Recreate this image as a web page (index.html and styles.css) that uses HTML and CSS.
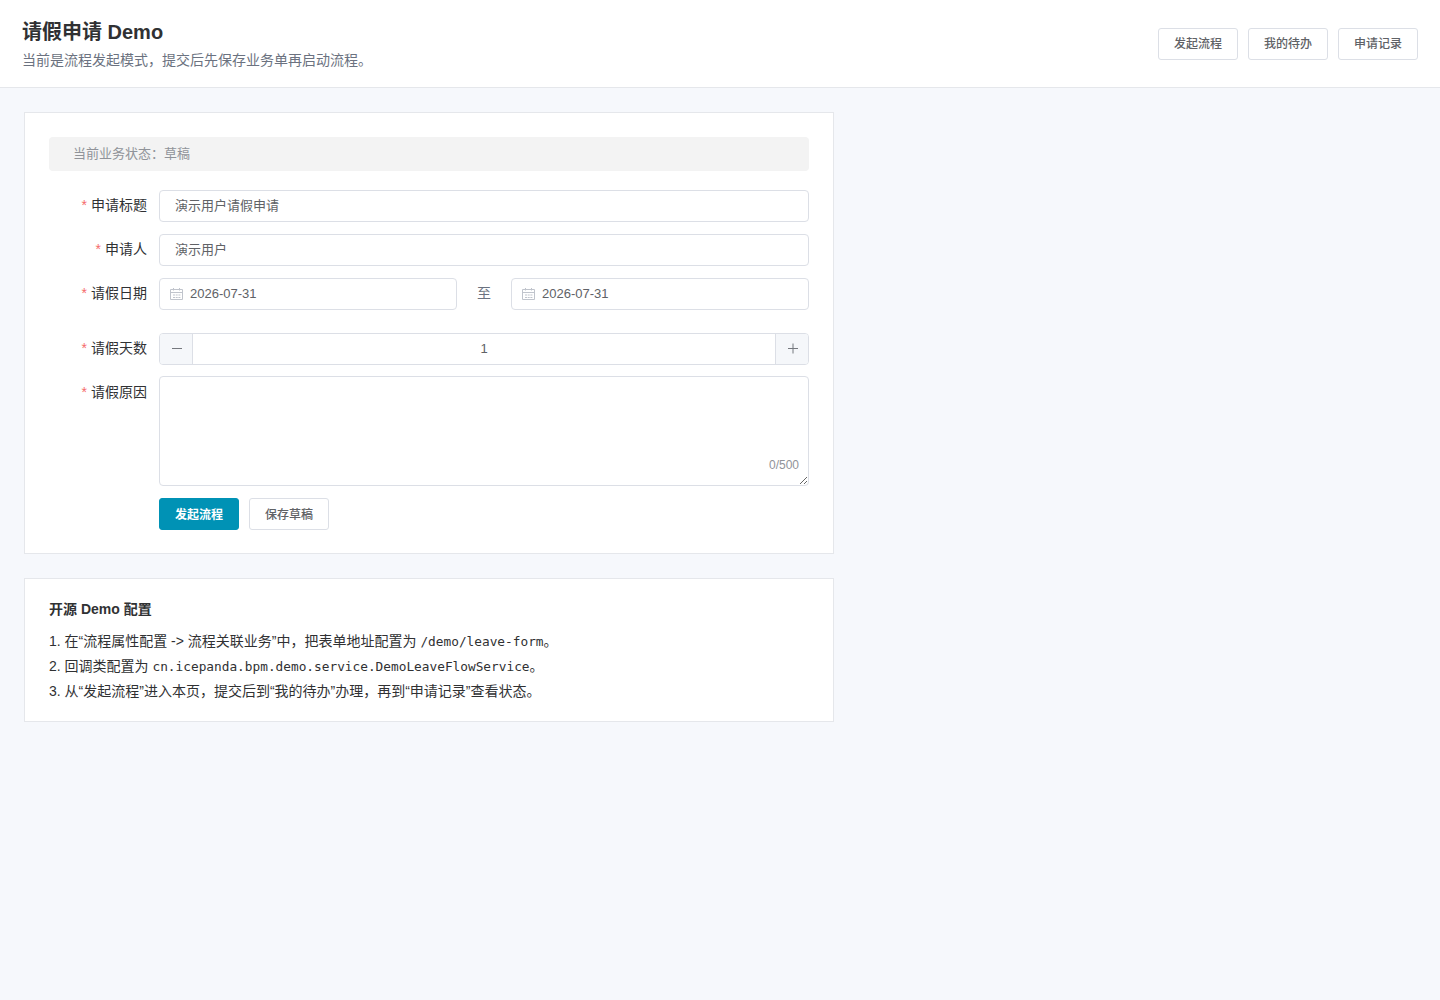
FILE: index.html
```html
<!DOCTYPE html>
<html lang="zh-CN">
<head>
    <meta charset="UTF-8">
    <meta name="viewport" content="width=device-width, initial-scale=1.0">
    <title>请假申请 Demo</title>
    <link rel="stylesheet" href="styles.css">
</head>
<body>
    <!-- Page header -->
    <header class="page-header">
        <div>
            <h1>请假申请 Demo</h1>
            <p class="subtitle">当前是流程发起模式，提交后先保存业务单再启动流程。</p>
        </div>
        <div class="actions">
            <button class="btn" type="button">发起流程</button>
            <button class="btn" type="button">我的待办</button>
            <button class="btn" type="button">申请记录</button>
        </div>
    </header>

    <main>
        <!-- Leave form -->
        <form class="card leave-form">
            <div class="alert">当前业务状态：草稿</div>

            <div class="form-item">
                <label for="title">申请标题</label>
                <input class="input" type="text" id="title" value="演示用户请假申请">
            </div>

            <div class="form-item">
                <label for="user">申请人</label>
                <input class="input" type="text" id="user" value="演示用户">
            </div>

            <div class="form-item date-item">
                <label for="start">请假日期</label>
                <div class="date-range">
                    <div class="date-box">
                        <svg class="icon" viewBox="0 0 13 13"><path d="M.5 1.5h12v10H.5zM.5 4.5h12M3.5 0v2.5M9.5 0v2.5M3 7h2M5.7 7h2M8.4 7h2M3 9.5h2M5.7 9.5h2M8.4 9.5h2"/></svg>
                        <input type="text" id="start" value="2026-07-31">
                    </div>
                    <span class="to">至</span>
                    <div class="date-box">
                        <svg class="icon" viewBox="0 0 13 13"><path d="M.5 1.5h12v10H.5zM.5 4.5h12M3.5 0v2.5M9.5 0v2.5M3 7h2M5.7 7h2M8.4 7h2M3 9.5h2M5.7 9.5h2M8.4 9.5h2"/></svg>
                        <input type="text" id="end" value="2026-07-31">
                    </div>
                </div>
            </div>

            <div class="form-item number-item">
                <label for="days">请假天数</label>
                <div class="number-box">
                    <button class="step" type="button"><svg viewBox="0 0 12 12"><path d="M1 5.5h10"/></svg></button>
                    <input type="text" id="days" value="1">
                    <button class="step" type="button"><svg viewBox="0 0 12 12"><path d="M1 5.5h10M6 .5v10"/></svg></button>
                </div>
            </div>

            <div class="form-item reason-item">
                <label for="reason">请假原因</label>
                <div class="textarea-box">
                    <textarea id="reason"></textarea>
                    <span class="count">0/500</span>
                </div>
            </div>

            <div class="form-buttons">
                <button class="btn primary" type="button">发起流程</button>
                <button class="btn" type="button">保存草稿</button>
            </div>
        </form>

        <!-- Setup notes -->
        <section class="card notes">
            <h2>开源 Demo 配置</h2>
            <p>1. 在“流程属性配置 -&gt; 流程关联业务”中，把表单地址配置为 <code>/demo/leave-form</code>。</p>
            <p>2. 回调类配置为 <code>cn.icepanda.bpm.demo.service.DemoLeaveFlowService</code>。</p>
            <p>3. 从“发起流程”进入本页，提交后到“我的待办”办理，再到“申请记录”查看状态。</p>
        </section>
    </main>
</body>
</html>
```
FILE: styles.css
```css
* {
    box-sizing: border-box;
}
body {
    margin: 0;
    min-height: 100vh;
    background-color: #f6f8fc;
    color: #303133;
    font-family: "Liberation Sans", "Noto Sans CJK SC", sans-serif;
    font-size: 14px;
}
input, textarea, button {
    font-family: inherit;
    font-size: 13px;
    color: #606266;
    outline: none;
}
.page-header {
    display: flex;
    justify-content: space-between;
    align-items: center;
    height: 88px;
    padding: 0 22px;
    background-color: #fff;
    border-bottom: 1px solid #e5e7eb;
}
h1 {
    margin: 0;
    font-size: 20px;
    line-height: 28px;
}
.subtitle {
    margin: 4px 0 0;
    line-height: 20px;
    color: #6b7280;
}
.actions, .form-buttons {
    display: flex;
    gap: 10px;
}
.btn {
    width: 80px;
    height: 32px;
    padding: 0 0 2px;
    font-size: 12px;
    font-weight: 500;
    background-color: #fff;
    border: 1px solid #dcdfe6;
    border-radius: 3px;
    cursor: pointer;
}
.btn.primary {
    background-color: #0092b5;
    border-color: #0092b5;
    color: #fff;
    font-weight: bold;
}
main {
    padding: 24px;
}
.card {
    width: 810px;
    padding: 24px;
    background-color: #fff;
    border: 1px solid #e5e7eb;
}
.leave-form {
    height: 442px;
}
.alert {
    height: 34px;
    margin-bottom: 19px;
    padding: 0 24px;
    line-height: 33px;
    font-size: 13px;
    color: #909399;
    background-color: #f3f3f3;
    border-radius: 4px;
}
.form-item {
    display: flex;
    margin-bottom: 12px;
}
.form-item label {
    flex: 0 0 110px;
    padding-right: 12px;
    text-align: right;
    line-height: 30px;
}
.form-item label::before {
    content: "*";
    margin-right: 4px;
    color: #f56c6c;
}
.date-item {
    margin-bottom: 23px;
}
.number-item {
    margin-bottom: 11px;
}
.reason-item label {
    line-height: 32px;
}
.input, .date-box, .number-box, textarea {
    background-color: #fff;
    border: 1px solid #dcdfe6;
    border-radius: 4px;
}
.input {
    flex: 1;
    height: 32px;
    padding: 0 15px 3px;
}
.date-range {
    flex: 1;
    display: flex;
}
.date-box {
    flex: 1;
    display: flex;
    align-items: center;
    height: 32px;
    padding-left: 10px;
}
.date-box input {
    width: 200px;
    border: none;
    padding: 0 0 1px;
    margin-left: 7px;
}
.icon {
    width: 13px;
    height: 13px;
    fill: none;
    stroke: #c0c4cc;
    stroke-width: 1;
}
.to {
    width: 54px;
    text-align: center;
    line-height: 30px;
    color: #6b7280;
}
.number-box {
    flex: 1;
    display: flex;
    height: 32px;
    overflow: hidden;
}
.number-box input {
    flex: 1;
    border: none;
    text-align: center;
    padding: 0 0 1px;
}
.step {
    display: flex;
    align-items: center;
    justify-content: center;
    width: 33px;
    padding: 0 0 0 2px;
    background-color: #f5f7fa;
    border: 0 solid #dcdfe6;
}
.step:first-child {
    border-right-width: 1px;
}
.step:last-child {
    border-left-width: 1px;
}
.step svg {
    width: 12px;
    height: 12px;
    fill: none;
    stroke: #75787e;
}
.textarea-box {
    position: relative;
    flex: 1;
    height: 110px;
}
textarea {
    display: block;
    width: 100%;
    height: 110px;
    padding: 5px 15px;
    resize: vertical;
}
.count {
    position: absolute;
    right: 10px;
    bottom: 14px;
    font-size: 12px;
    line-height: 14px;
    color: #909399;
}
.form-buttons {
    padding-left: 110px;
}
.notes {
    height: 144px;
    margin-top: 24px;
    padding-top: 20px;
}
h2 {
    margin: 0 0 10px;
    font-size: 14px;
    line-height: 20px;
}
.notes p {
    margin: 0;
    height: 25px;
    line-height: 25px;
    white-space: nowrap;
}
code {
    font-family: "DejaVu Sans Mono", monospace;
    font-size: 12.79px;
    line-height: 1;
}
```
